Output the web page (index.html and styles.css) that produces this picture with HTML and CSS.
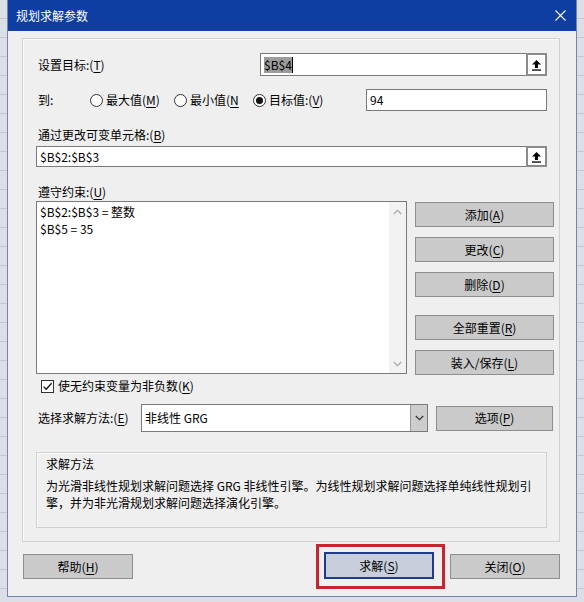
FILE: index.html
```html
<!DOCTYPE html>
<html lang="zh-CN">
<head>
<meta charset="utf-8">
<title>规划求解参数</title>
<link rel="stylesheet" href="styles.css">
</head>
<body>
<div class="window">
  <div class="titlebar">
    <span class="title">规划求解参数</span>
    <svg class="close" width="11" height="11" viewBox="0 0 11 11"><path d="M0.5 0.5L10.5 10.5M10.5 0.5L0.5 10.5" stroke="#ffffff" stroke-width="1.1" fill="none"/></svg>
  </div>

  <div class="group main">
    <div class="row r1">
      <span class="lbl lbl-target">设置目标:(<u>T</u>)</span>
      <div class="ref ref-target">
        <div class="ref-text"><span class="sel">$B$4</span><span class="caret"></span></div>
        <div class="ref-btn"><svg width="11" height="12" viewBox="0 0 11 12"><path d="M5.5 1L10 5.6H7V9H4V5.6H1Z" fill="#000"/><rect x="1" y="10.4" width="9" height="1.3" fill="#000"/></svg></div>
      </div>
    </div>

    <div class="row r2">
      <span class="lbl lbl-to">到:</span>
      <span class="radio ri1"><span class="circle"></span><span>最大值(<u>M</u>)</span></span>
      <span class="radio ri2"><span class="circle"></span><span>最小值(<u>N</u></span></span>
      <span class="radio ri3"><span class="circle on"></span><span>目标值:(<u>V</u>)</span></span>
      <div class="field field-value">94</div>
    </div>

    <div class="lbl lbl-line l3">通过更改可变单元格:(<u>B</u>)</div>
    <div class="ref ref-cells">
      <div class="ref-text">$B$2:$B$3</div>
      <div class="ref-btn"><svg width="11" height="12" viewBox="0 0 11 12"><path d="M5.5 1L10 5.6H7V9H4V5.6H1Z" fill="#000"/><rect x="1" y="10.4" width="9" height="1.3" fill="#000"/></svg></div>
    </div>

    <div class="lbl lbl-line l4">遵守约束:(<u>U</u>)</div>
    <div class="listrow">
      <div class="list">
        <div class="list-items">
          <div class="item">$B$2:$B$3 = 整数</div>
          <div class="item">$B$5 = 35</div>
        </div>
        <div class="vscroll">
          <svg width="9" height="6" viewBox="0 0 9 6"><path d="M0.8 5L4.5 1.3L8.2 5" stroke="#a6a6a6" stroke-width="1.2" fill="none"/></svg>
          <svg width="9" height="6" viewBox="0 0 9 6"><path d="M0.8 1L4.5 4.7L8.2 1" stroke="#a6a6a6" stroke-width="1.2" fill="none"/></svg>
        </div>
      </div>
      <div class="sidebtns">
        <div class="btn">添加(<u>A</u>)</div>
        <div class="btn">更改(<u>C</u>)</div>
        <div class="btn">删除(<u>D</u>)</div>
        <div class="btn gap-big">全部重置(<u>R</u>)</div>
        <div class="btn">装入/保存(<u>L</u>)</div>
      </div>
    </div>

    <div class="row chkrow">
      <span class="checkbox"><svg width="11" height="11" viewBox="0 0 11 11"><path d="M1.6 5.6L4.2 8.3L9.6 2.2" stroke="#111" stroke-width="1.3" fill="none"/></svg></span>
      <span>使无约束变量为非负数(<u>K</u>)</span>
    </div>

    <div class="row selrow">
      <span class="lbl lbl-method">选择求解方法:(<u>E</u>)</span>
      <div class="select">
        <span class="select-text">非线性 GRG</span>
        <span class="select-btn"><svg width="9" height="6" viewBox="0 0 9 6"><path d="M0.8 1L4.5 4.7L8.2 1" stroke="#333" stroke-width="1.2" fill="none"/></svg></span>
      </div>
      <div class="btn btn-options">选项(<u>P</u>)</div>
    </div>

    <div class="group info">
      <div class="info-title">求解方法</div>
      <div class="info-text">为光滑非线性规划求解问题选择 GRG 非线性引擎。为线性规划求解问题选择单纯线性规划引<br>擎，并为非光滑规划求解问题选择演化引擎。</div>
    </div>
  </div>

  <div class="bottom">
    <div class="btn btn-foot btn-help">帮助(<u>H</u>)</div>
    <div class="highlight">
      <div class="btn btn-foot btn-default">求解(<u>S</u>)</div>
    </div>
    <div class="btn btn-foot btn-close">关闭(<u>O</u>)</div>
  </div>
</div>
</body>
</html>
```

FILE: styles.css
```css
* { box-sizing: border-box; }

html, body {
  margin: 0;
  padding: 0;
}

body {
  width: 584px;
  height: 602px;
  overflow: hidden;
  background-color: #dcdfe6;
  background-image: repeating-linear-gradient(to bottom, transparent 0, transparent 18px, #c3c7cf 18px, #c3c7cf 19px);
  font-family: "Noto Sans CJK SC", "Noto Sans", sans-serif;
  font-size: 12px;
  line-height: 16px;
  color: #000;
}

u { text-decoration: underline; text-underline-offset: 2px; }

.window {
  margin-left: 7px;
  width: 570px;
  height: 597px;
  background: #efefef;
  border: 1px solid #7486ad;
  border-top: none;
  display: flex;
  flex-direction: column;
}

.titlebar {
  height: 31px;
  flex: none;
  background: #0e3ea1;
  color: #fff;
  display: flex;
  align-items: center;
  justify-content: space-between;
  padding: 0 10px 0 8px;
}

.title { font-size: 12px; line-height: 16px; }

.close { display: block; }

.group {
  border: 1px solid #d0d0d0;
  box-shadow: inset 1px 1px 0 #fbfbfb;
}

.main {
  margin: 7px 16px 0 14px;
  width: 538px;
  padding: 0 5px 13px 13px;
  display: flex;
  flex-direction: column;
}

.row { display: flex; align-items: center; }

.lbl { padding-left: 2px; white-space: nowrap; }

.r1 { margin-top: 14px; height: 23px; }
.lbl-target { width: 224px; }

.ref {
  display: flex;
  background: #fff;
  border: 1px solid #7a7a7a;
  border-right: none;
}

.ref-target { width: 287px; height: 23px; }

.ref-text {
  flex: 1;
  display: flex;
  align-items: center;
  padding-left: 3px;
  white-space: nowrap;
}

.sel {
  background: #9c9c9c;
  color: #000;
  padding: 0 0 0 0;
  line-height: 16px;
}

.caret {
  display: inline-block;
  width: 1px;
  height: 16px;
  background: #000;
}

.ref-btn {
  width: 21px;
  margin-top: -1px;
  margin-bottom: -1px;
  border: 2px solid #8b8b8b;
  background: #fff;
  display: flex;
  align-items: center;
  justify-content: center;
}

.r2 { margin-top: 13px; height: 22px; }
.lbl-to { width: 54px; }

.radio {
  display: flex;
  align-items: center;
  gap: 3px;
  white-space: nowrap;
}
.ri1 { width: 84px; }
.ri2 { width: 79px; }
.ri3 { width: 113px; }

.circle {
  width: 13px;
  height: 13px;
  border: 1px solid #333;
  border-radius: 50%;
  background: #fff;
  display: flex;
  align-items: center;
  justify-content: center;
  flex: none;
}
.circle.on::after {
  content: "";
  width: 7px;
  height: 7px;
  border-radius: 50%;
  background: #111;
}

.field {
  background: #fff;
  border: 1px solid #7a7a7a;
  padding-left: 3px;
  display: flex;
  align-items: center;
}
.field-value { width: 181px; height: 22px; }

.lbl-line { height: 16px; }
.l3 { margin-top: 16px; }
.ref-cells { margin-top: 3px; width: 511px; height: 21px; }
.l4 { margin-top: 17px; }

.listrow {
  margin-top: 1px;
  display: flex;
  align-items: flex-start;
}

.list {
  width: 371px;
  height: 173px;
  background: #fff;
  border: 1px solid #7a7a7a;
  display: flex;
}

.list-items {
  flex: 1;
  padding: 1px 0 0 3px;
  line-height: 17px;
}

.vscroll {
  width: 17px;
  background: #f2f2f2;
  display: flex;
  flex-direction: column;
  justify-content: space-between;
  align-items: center;
  padding: 7px 0 6px 0;
}
.vscroll svg { display: block; }

.sidebtns {
  margin-left: 8px;
  margin-top: 1px;
  width: 139px;
  display: flex;
  flex-direction: column;
  gap: 10px;
}
.sidebtns .gap-big { margin-top: 8px; }

.btn {
  height: 25px;
  background: #cacaca;
  border: 1px solid #8e8e8e;
  display: flex;
  align-items: center;
  justify-content: center;
  white-space: nowrap;
}

.chkrow { margin-top: 3px; height: 16px; gap: 4px; padding-left: 5px; }

.checkbox {
  width: 13px;
  height: 13px;
  border: 1px solid #333;
  background: #fff;
  display: flex;
  align-items: center;
  justify-content: center;
}
.checkbox svg { display: block; }

.selrow { margin-top: 10px; height: 28px; }
.lbl-method { width: 105px; }

.select {
  width: 287px;
  height: 28px;
  background: #fff;
  border: 1px solid #7a7a7a;
  display: flex;
}
.select-text {
  flex: 1;
  display: flex;
  align-items: center;
  padding-left: 3px;
  white-space: nowrap;
}
.select-btn {
  width: 17px;
  background: #cdcdcd;
  border-left: 1px solid #9a9a9a;
  display: flex;
  align-items: center;
  justify-content: center;
}

.btn-options { margin-left: 8px; width: 117px; }

.info {
  margin-top: 20px;
  width: 511px;
  height: 76px;
  padding: 3px 0 0 9px;
}
.info-title { line-height: 16px; }
.info-text { margin-top: 5px; line-height: 17px; white-space: nowrap; }

.bottom {
  margin-top: 2px;
  display: flex;
  align-items: center;
  padding-left: 15px;
}

.btn-foot { width: 110px; }

.highlight {
  margin-left: auto;
  border: 3px solid #c3262d;
  padding: 5px 8px 7px 5px;
}

.btn-default {
  height: 27px;
  background: #c8cedb;
  border: 2px solid #1f3c8a;
}

.btn-close { margin-left: 5px; margin-right: 16px; }
```
